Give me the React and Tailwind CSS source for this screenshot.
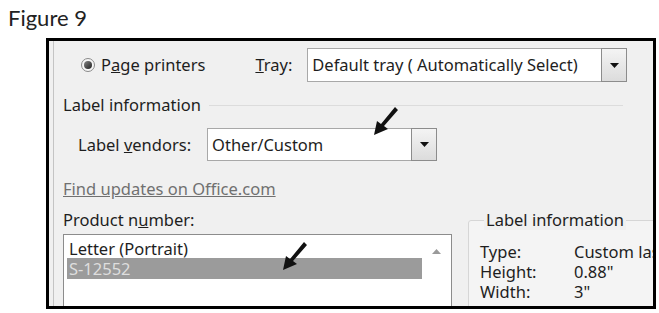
import React from 'react';

const ui = { fontFamily: '"Noto Sans", "Open Sans", sans-serif' };

// black call-out arrow, drawn from tail to tip
function Arrow({ className }) {
  return (
    <svg className={className} viewBox="0 0 24 28" width="24" height="28">
      <polygon points="21,0 24,3 10,19 14,22 0,28 3,14 7,17" fill="#111" />
    </svg>
  );
}

function DropButton() {
  return (
    <div className="w-[26px] h-full flex items-center justify-center border border-[#8c8c8c] bg-gradient-to-b from-[#f4f4f4] to-[#dcdcdc]">
      <svg width="9" height="5" viewBox="0 0 9 5">
        <polygon points="0,0 9,0 4.5,5" fill="#111" />
      </svg>
    </div>
  );
}

function Combo({ value, width, height }) {
  return (
    <div className={`flex ${height}`}>
      <div
        className={`${width} h-full flex items-center pl-[4px] bg-white border border-[#a8a8a8] border-r-0`}
      >
        {value}
      </div>
      <DropButton />
    </div>
  );
}

export default function App() {
  return (
    <div className="w-[659px] h-[313px] bg-white relative overflow-hidden">
      <div
        className="absolute left-[8px] top-[1px] text-[22px] text-[#222]"
        style={{ fontFamily: 'Lato, "DejaVu Sans", sans-serif' }}
      >
        Figure 9
      </div>

      <div className="absolute left-[46px] top-[38px] w-[610px] h-[271px] border-[3px] border-black bg-[#f0f0f0] overflow-hidden">
        <div className="h-full ml-[4px] border-l border-[#c4c4c4] flex flex-col pl-[9px] text-[16.5px] leading-[20px] text-[#1e1e1e] relative" style={ui}>
          {/* printer type + tray */}
          <div className="h-[34px] shrink-0 mt-[7px] flex items-center">
            <div className="ml-[18px] w-[14px] h-[14px] rounded-full border border-[#8a8a8a] bg-[#f6f6f6] flex items-center justify-center">
              <div className="w-[8px] h-[8px] rounded-full bg-gradient-to-br from-[#888] to-[#222]" />
            </div>
            <span className="ml-[6px]">
              P<span className="underline">a</span>ge printers
            </span>
            <span className="ml-[50px]">
              <span className="underline">T</span>ray:
            </span>
            <div className="ml-[15px]">
              <Combo value="Default tray ( Automatically Select)" width="w-[294px]" height="h-[34px]" />
            </div>
          </div>

          {/* Label information header */}
          <div className="h-[20px] shrink-0 mt-[13px] flex items-center gap-[8px]">
            <span>Label information</span>
            <div className="flex-1 mr-[30px] border-t border-[#dcdcdc]" />
          </div>

          {/* vendors */}
          <div className="h-[33px] shrink-0 mt-[13px] flex items-center pl-[15px]">
            <span>
              Label <span className="underline">v</span>endors:
            </span>
            <div className="ml-[16px]">
              <Combo value="Other/Custom" width="w-[204px]" height="h-[33px]" />
            </div>
          </div>

          <div className="h-[20px] shrink-0 mt-[18px] flex items-center">
            <span className="underline text-[#707070]">Find updates on Office.com</span>
          </div>

          {/* product list + label info */}
          <div className="flex shrink-0 mt-[11px]">
            <div className="w-[389px] shrink-0 flex flex-col">
              <div className="h-[20px] flex items-center">
                Product n<span className="underline">u</span>mber:
              </div>
              <div className="mt-[4px] h-[110px] flex bg-white border border-[#8c8c8c]">
                <div className="flex-1 pl-[3px] pt-[4px]">
                  <div className="h-[19px] flex items-center pl-[2px]">Letter (Portrait)</div>
                  <div className="h-[21px] flex items-center pl-[2px] bg-[#9b9b9b] text-[#dedede]">S-12552</div>
                </div>
                <div className="w-[29px] flex justify-center pt-[14px]">
                  <svg width="9" height="5" viewBox="0 0 9 5">
                    <polygon points="4.5,0 9,5 0,5" fill="#9a9a9a" />
                  </svg>
                </div>
              </div>
            </div>

            <fieldset className="ml-[16px] w-[220px] shrink-0 border border-[#d6d6d6] rounded-[3px] bg-[#f4f4f4] pl-[11px] pt-[12px]">
              <legend className="ml-[4px] px-[2px] bg-[#f0f0f0]">Label information</legend>
              {[
                ['Type:', 'Custom laser'],
                ['Height:', '0.88"'],
                ['Width:', '3"'],
              ].map(([k, v]) => (
                <div key={k} className="h-[20px] flex items-center whitespace-nowrap">
                  <span className="w-[94px]">{k}</span>
                  <span>{v}</span>
                </div>
              ))}
            </fieldset>
          </div>

          <Arrow className="absolute left-[320px] top-[66px]" />
          <Arrow className="absolute left-[229px] top-[201px]" />
        </div>
      </div>
    </div>
  );
}
